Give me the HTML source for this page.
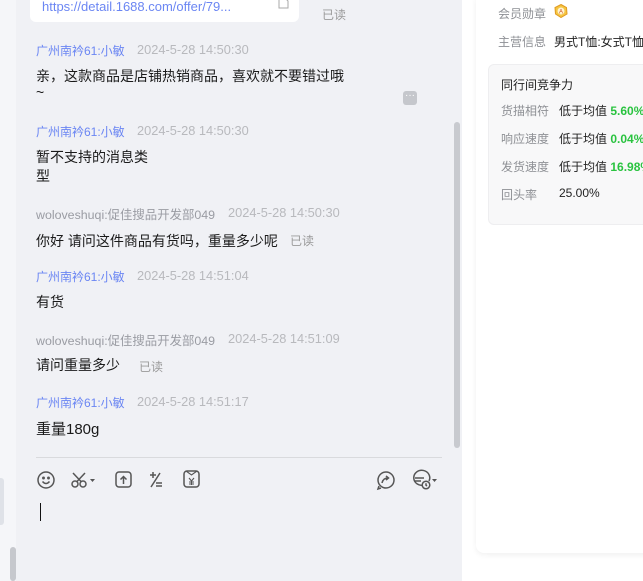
<!DOCTYPE html>
<html><head><meta charset="utf-8"><style>
*{margin:0;padding:0;box-sizing:border-box}
body{width:643px;height:581px;overflow:hidden;background:#f5f6f9;font-family:"Liberation Sans","Noto Sans CJK SC",sans-serif;position:relative}
.a{position:absolute;white-space:nowrap}
.chat{position:absolute;left:16px;top:0;width:446px;height:581px;background:#f0f1f5}
.n{font-size:12px;color:#6b86f3}
.g{font-size:12.4px;color:#9a9ca3}
.t{font-size:12.8px;color:#b8b9bd}
.m{font-size:14px;color:#1a1a1a}
.r{font-size:12px;color:#9a9a9a}
.lbl{font-size:12px;color:#8e9095}
.val{font-size:12px;color:#222}
.grn{color:#2ac340;font-weight:bold}
</style></head><body>
<div class="a" style="left:0;top:478px;width:4px;height:47px;background:#dfe2e8;border-radius:0 3px 3px 0"></div>
<div class="a" style="left:10px;top:547px;width:6px;height:34px;background:#c6c8cd;border-radius:3px"></div>
<div class="chat"></div>
<div class="a" style="left:30px;top:-6px;width:269px;height:28px;background:#fff;border-radius:6px"></div>
<div class="a" style="left:42px;top:-1px;font-size:13px;color:#6b86f3">https://detail.1688.com/offer/79...</div>
<svg class="a" style="left:278px;top:-2px" width="12" height="12"><path d="M1 0V10H10V3L7 0" fill="none" stroke="#aaa" stroke-width="1"/></svg>
<div class="a r" style="left:322px;top:6px">已读</div>

<div class="a n" style="left:36px;top:42px">广州南衿61:小敏</div><div class="a t" style="left:137px;top:42px">2024-5-28 14:50:30</div>
<div class="a m" style="left:36px;top:66px">亲，这款商品是店铺热销商品，喜欢就不要错过哦</div>
<div class="a m" style="left:36px;top:84px">~</div>
<div class="a" style="left:403px;top:91px;width:14px;height:14px;background:#c5c7cc;border-radius:3px;color:#fff;font-size:10px;line-height:10px;text-align:center">···</div>

<div class="a n" style="left:36px;top:123px">广州南衿61:小敏</div><div class="a t" style="left:137px;top:123px">2024-5-28 14:50:30</div>
<div class="a m" style="left:36px;top:147px">暂不支持的消息类</div>
<div class="a m" style="left:36px;top:166px">型</div>

<div class="a g" style="left:36px;top:205px">woloveshuqi:促佳搜品开发部049</div><div class="a t" style="left:228px;top:205px">2024-5-28 14:50:30</div>
<div class="a m" style="left:36px;top:231px">你好 请问这件商品有货吗，重量多少呢</div><div class="a r" style="left:290px;top:232px">已读</div>

<div class="a n" style="left:36px;top:268px">广州南衿61:小敏</div><div class="a t" style="left:137px;top:268px">2024-5-28 14:51:04</div>
<div class="a m" style="left:36px;top:292px">有货</div>

<div class="a g" style="left:36px;top:331px">woloveshuqi:促佳搜品开发部049</div><div class="a t" style="left:228px;top:331px">2024-5-28 14:51:09</div>
<div class="a m" style="left:36px;top:355px">请问重量多少</div><div class="a r" style="left:139px;top:358px">已读</div>

<div class="a n" style="left:36px;top:394px">广州南衿61:小敏</div><div class="a t" style="left:137px;top:394px">2024-5-28 14:51:17</div>
<div class="a m" style="left:36px;top:418px;font-size:15px">重量180g</div>

<div class="a" style="left:454px;top:122px;width:6px;height:326px;background:#c8cacf;border-radius:3px"></div>
<div class="a" style="left:36px;top:457px;width:406px;height:1px;background:#d9dadd"></div>

<svg class="a" style="left:36px;top:469px" width="410" height="22" fill="none" stroke="#555" stroke-width="1.5">
<circle cx="10" cy="11" r="8"/><circle cx="7.5" cy="9" r=".7" fill="#555"/><circle cx="12.5" cy="9" r=".7" fill="#555"/><path d="M6.5 12.5Q10 16.5 13.5 12.5"/>
<circle cx="39" cy="15" r="3"/><circle cx="47" cy="15" r="3"/><path d="M41 12.5L49 4M45 12.5L37 4"/>
<path d="M54 10h5l-2.5 3z" fill="#555" stroke="none"/>
<rect x="80" y="3" width="15" height="15" rx="3"/><path d="M87.5 15V8M84.5 10.5l3-3 3 3"/>
<path d="M117 3v6M114 6h6M124 4l-9 14M120 14h6M120 17h6"/>
<rect x="148" y="2" width="15" height="16" rx="3"/><path d="M150 2l5.5 4 5.5-4M153 9l2.5 3 2.5-3M155.5 12v4M153 13h5M153 15h5" stroke-width="1.1"/>
<circle cx="350" cy="11" r="8"/><path d="M346 14q1-5 6-5M350 7l2.5 2-2.5 2"/><path d="M343 17l-1 3 3-1"/>
<path d="M388 16a8 7.5 0 1 1 5-4"/><path d="M379 9h9M379 12h6"/><circle cx="390" cy="16" r="3.8" fill="#f0f1f5"/><path d="M390 14.3v1.9l1 .8"/>
<path d="M396 10h5l-2.5 3z" fill="#555" stroke="none"/>
</svg>
<div class="a" style="left:40px;top:503px;width:1px;height:18px;background:#111"></div>

<div class="a" style="left:462px;top:0;width:181px;height:581px;background:#fff"></div>
<div class="a" style="left:476px;top:-10px;width:180px;height:563px;background:#fff;border-radius:8px;box-shadow:0 2px 6px rgba(0,0,0,0.06)"></div>
<div class="a lbl" style="left:498px;top:5px">会员勋章</div>
<svg class="a" style="left:554px;top:4px" width="14" height="14"><polygon points="7,0.5 12.5,3.5 13,10 7,13.5 1.5,10 1,3.5" fill="#f5c542" stroke="#e09a20"/><circle cx="7" cy="7" r="3.5" fill="#fff3d0"/><text x="7" y="9.5" font-size="6" text-anchor="middle" fill="#d0501f" font-family="Liberation Sans">A</text></svg>
<div class="a lbl" style="left:498px;top:33px">主营信息</div><div class="a val" style="left:554px;top:33px">男式T恤:女式T恤</div>
<div class="a" style="left:488px;top:64px;width:170px;height:161px;background:#f8f8f9;border:1px solid #eeeef0;border-radius:6px"></div>
<div class="a val" style="left:501px;top:76px">同行间竞争力</div>
<div class="a lbl" style="left:501px;top:102px">货描相符</div><div class="a val" style="left:559px;top:102px">低于均值 <span class="grn">5.60%</span></div>
<div class="a lbl" style="left:501px;top:130px">响应速度</div><div class="a val" style="left:559px;top:130px">低于均值 <span class="grn">0.04%</span></div>
<div class="a lbl" style="left:501px;top:158px">发货速度</div><div class="a val" style="left:559px;top:158px">低于均值 <span class="grn">16.98%</span></div>
<div class="a lbl" style="left:501px;top:186px">回头率</div><div class="a val" style="left:559px;top:186px">25.00%</div>
</body></html>
